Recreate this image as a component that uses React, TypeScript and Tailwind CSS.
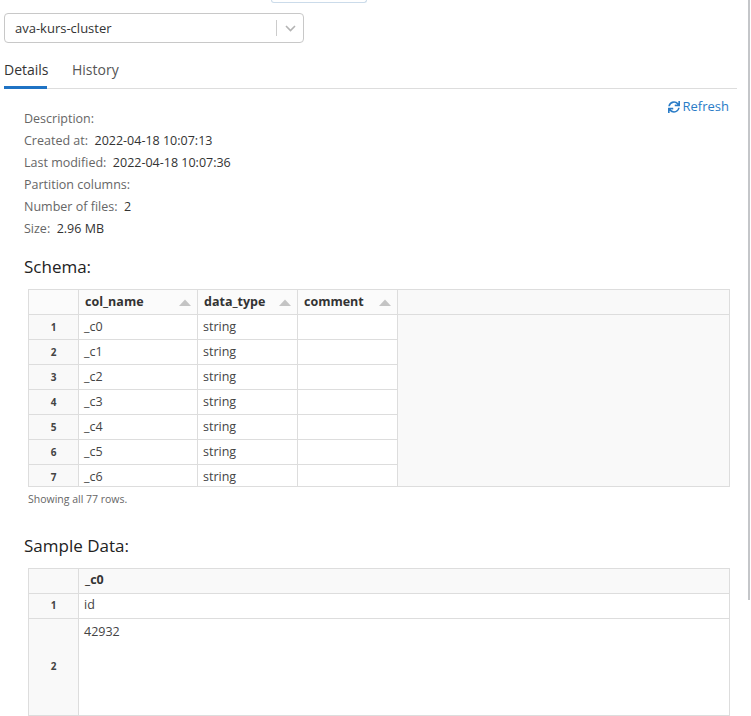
import React from "react";

const font = { fontFamily: '"Open Sans", "Noto Sans", sans-serif' };

function SortUp() {
  return (
    <svg width="12" height="7" viewBox="0 0 12 7" className="shrink-0">
      <path d="M0 7 L6 0.5 L12 7 Z" fill="#c4c4c4" />
    </svg>
  );
}

function RefreshIcon() {
  return (
    <svg width="12" height="12" viewBox="0 0 512 512" fill="#2a7cc7">
      <path d="M440.65 12.57l4 82.77A247.16 247.16 0 0 0 255.83 8C134.73 8 33.910 94.92 12.29 209.82A12 12 0 0 0 24.09 224h49.05a12 12 0 0 0 11.67-9.26 175.91 175.91 0 0 1 317-56.94l-101.46-4.86a12 12 0 0 0-12.570 12v47.41a12 12 0 0 0 12 12H500a12 12 0 0 0 12-12V12a12 12 0 0 0-12-12h-47.37a12 12 0 0 0-11.98 12.57zM255.83 432a175.61 175.61 0 0 1-146-77.8l101.8 4.87a12 12 0 0 0 12.57-12v-47.4a12 12 0 0 0-12-12H12a12 12 0 0 0-12 12V500a12 12 0 0 0 12 12h47.35a12 12 0 0 0 12-12.6l-4.15-82.57A247.17 247.17 0 0 0 255.83 504c121.11 0 221.93-86.92 243.55-201.820a12 12 0 0 0-11.8-14.18h-49.05a12 12 0 0 0-11.67 9.26A175.86 175.86 0 0 1 255.83 432z" />
    </svg>
  );
}

const schemaRows = ["_c0", "_c1", "_c2", "_c3", "_c4", "_c5", "_c6"];

export default function App() {
  return (
    <div className="relative w-[751px] h-[716px] overflow-hidden bg-white text-[#333]" style={font}>
      {/* scrollbar */}
      <div className="absolute right-[1px] top-0 w-[2px] h-[600px] bg-[#c4c6c9]" />

      <div className="w-[733px] ml-[4px]">
        {/* partial element at top */}
        <div className="ml-[267px] w-[96px] h-[3px] border-x border-b border-[#cbdbea] rounded-b-[5px]" />

        {/* select */}
        <div className="mt-[10px] w-[300px] h-[30px] border border-[#c8c8c8] rounded-[4px] flex items-center">
          <span className="flex-1 pl-[10px] text-[13px] text-[#333] leading-none">ava-kurs-cluster</span>
          <div className="w-px h-[16px] bg-[#ccc]" />
          <div className="w-[26px] flex items-center justify-center">
            <svg width="11" height="7" viewBox="0 0 11 7">
              <path d="M1 1 L5.5 5.5 L10 1" stroke="#b3b3b3" strokeWidth="1.6" fill="none" />
            </svg>
          </div>
        </div>

        {/* tabs */}
        <div className="mt-[13px] flex border-b border-[#ddd] h-[33px] items-stretch">
          <div className="relative text-[14px] text-[#333] pt-[3px] w-[43px]">
            Details
            <div className="absolute left-0 right-0 bottom-[-1px] h-[3px] bg-[#1f73c4]" />
          </div>
          <div className="ml-[25px] text-[14px] text-[#555] pt-[3px]">History</div>
        </div>

        {/* details */}
        <div className="relative pl-[20px] pt-[19px]">
          <div className="absolute right-[8px] top-[8px] flex items-center gap-[3px] text-[13px] text-[#2a7cc7]">
            <RefreshIcon />
            <span>Refresh</span>
          </div>
          <div className="text-[12.5px] leading-[22px]">
            <div className="text-[#666]">Description:</div>
            <div className="text-[#666]">Created at:&nbsp; <span className="text-[#333]">2022-04-18 10:07:13</span></div>
            <div className="text-[#666]">Last modified:&nbsp; <span className="text-[#333]">2022-04-18 10:07:36</span></div>
            <div className="text-[#666]">Partition columns:</div>
            <div className="text-[#666]">Number of files:&nbsp; <span className="text-[#333]">2</span></div>
            <div className="text-[#666]">Size:&nbsp; <span className="text-[#333]">2.96 MB</span></div>
          </div>

          <div className="mt-[15px] text-[17px] leading-[24px] text-[#222]">Schema:</div>

          {/* schema table */}
          <div className="mt-[10px] ml-[4px] w-[702px] h-[198px] overflow-hidden border border-[#ddd] flex text-[12.5px]">
            <div className="w-[369px]">
              <div className="flex h-[25px] border-b border-[#ddd] bg-[#fbfbfb]">
                <div className="w-[50px] border-r border-[#ddd]" />
                <div className="w-[119px] border-r border-[#ddd] flex items-center justify-between px-[6px] font-bold">
                  <span>col_name</span>
                  <SortUp />
                </div>
                <div className="w-[100px] border-r border-[#ddd] flex items-center justify-between px-[6px] font-bold">
                  <span>data_type</span>
                  <SortUp />
                </div>
                <div className="w-[100px] border-r border-[#ddd] flex items-center justify-between px-[6px] font-bold">
                  <span>comment</span>
                  <SortUp />
                </div>
              </div>
              {schemaRows.map((c, i) => (
                <div key={c} className="flex h-[25px] border-b border-[#ddd]">
                  <div className="w-[50px] border-r border-[#ddd] bg-[#f9f9f9] flex items-center justify-center text-[10px] font-bold text-[#444]">
                    {i + 1}
                  </div>
                  <div className="w-[119px] border-r border-[#ddd] flex items-center px-[5px] text-[#444]">{c}</div>
                  <div className="w-[100px] border-r border-[#ddd] flex items-center px-[5px] text-[#444]">string</div>
                  <div className="w-[100px] border-r border-[#ddd]" />
                </div>
              ))}
            </div>
            <div className="flex-1 flex flex-col bg-[#f9f9f9]">
              <div className="h-[25px] border-b border-[#ddd]" />
            </div>
          </div>
          <div className="ml-[4px] mt-[5px] text-[10.5px] text-[#666]">Showing all 77 rows.</div>

          <div className="mt-[26px] text-[17px] leading-[24px] text-[#222]">Sample Data:</div>

          {/* sample table */}
          <div className="mt-[10px] ml-[4px] w-[702px] border border-[#ddd] text-[12.5px]">
            <div className="flex h-[25px] border-b border-[#ddd] bg-[#f9f9f9]">
              <div className="w-[50px] border-r border-[#ddd]" />
              <div className="flex-1 flex items-center px-[6px] font-bold">_c0</div>
            </div>
            <div className="flex h-[25px] border-b border-[#ddd]">
              <div className="w-[50px] border-r border-[#ddd] bg-[#f9f9f9] flex items-center justify-center text-[10px] font-bold text-[#444]">1</div>
              <div className="flex-1 flex items-center px-[5px] text-[#444]">id</div>
            </div>
            <div className="flex h-[96px]">
              <div className="w-[50px] border-r border-[#ddd] bg-[#f9f9f9] flex items-center justify-center text-[10px] font-bold text-[#444]">2</div>
              <div className="flex-1 px-[5px] pt-[4px] text-[#444]">42932</div>
            </div>
          </div>
        </div>
      </div>
    </div>
  );
}
